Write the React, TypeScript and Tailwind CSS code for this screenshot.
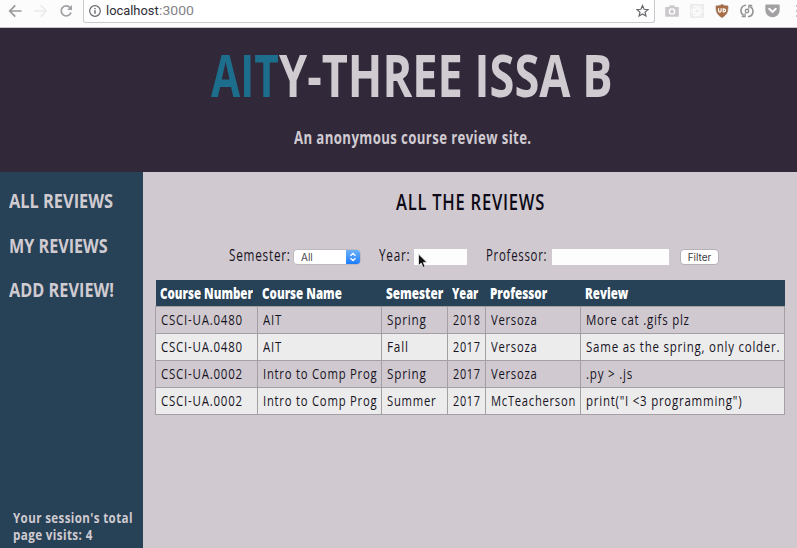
import { useLayoutEffect, useRef, useState } from "react";

type FitProps = { w: number; children: string; className?: string };

/** Condensed text: one line squeezed horizontally to a given width. */
function Fit({ w, children, className = "" }: FitProps) {
  const ref = useRef<HTMLSpanElement>(null);
  const [scale, setScale] = useState(1);
  useLayoutEffect(() => {
    if (ref.current) setScale(w / ref.current.offsetWidth);
  }, [w, children]);
  return (
    <span className={`flex ${className}`} style={{ width: w }}>
      <span ref={ref} className="block shrink-0 origin-left whitespace-pre" style={{ transform: `scaleX(${scale})` }}>
        {children}
      </span>
    </span>
  );
}

function BrowserBar() {
  return (
    <div className="flex h-[28px] shrink-0 items-start border-b border-[#c8c5ca] bg-[#fcfcfc]">
      <svg className="ml-[8px] mt-[4px] h-[14px] w-[15px] shrink-0" viewBox="0 0 15 14" fill="none" stroke="#9a989b" strokeWidth="1.7">
        <path d="M13.5 7H2M7.3 1.3L1.7 7l5.6 5.7" />
      </svg>
      <svg className="ml-[10px] mt-[4px] h-[14px] w-[15px] shrink-0" viewBox="0 0 15 14" fill="none" stroke="#ebeaec" strokeWidth="1.7">
        <path d="M1 7h11.5M7.700 1.300L13.300 7l-5.600 5.700" />
      </svg>
      <svg className="ml-[11px] mt-[4px] h-[14px] w-[14px] shrink-0" viewBox="0 0 15 15" fill="none" stroke="#a3a1a5" strokeWidth="1.9">
        <path d="M12 4A5.4 5.4 0 1 0 12.9 9" />
        <path d="M13.9 1.2v5.3H8.6z" fill="#a3a1a5" stroke="none" />
      </svg>
      <div className="ml-[10px] flex h-[23px] w-[572px] shrink-0 rounded-b-[3px] border border-t-0 border-[#cbc9cf] bg-white">
        <svg className="ml-[5px] mt-[5px] h-[12px] w-[12px] shrink-0" viewBox="0 0 12 12" fill="none" stroke="#67656c" strokeWidth="1.2">
          <circle cx="6" cy="6" r="5.3" />
          <path d="M6 5.2v3.6M6 2.9v1.3" strokeWidth="1.4" />
        </svg>
        <div className="ml-[5px] mt-[2px] flex font-['Roboto',sans-serif] text-[13px] leading-[18px]">
          <Fit w={52.5} className="text-[#2f2d35]">localhost</Fit>
          <Fit w={34.5} className="text-[#858388]">:3000</Fit>
        </div>
        <svg className="ml-auto mr-[5px] mt-[4px] h-[14px] w-[13px]" viewBox="0 0 14 14" fill="none" stroke="#69676c" strokeWidth="1.3">
          <path d="M7 1.2l1.7 3.9 4.2.4-3.2 2.8 1 4.1L7 10.2l-3.7 2.2 1-4.1L1.1 5.5l4.2-.4z" />
        </svg>
      </div>
      <svg className="ml-[10px] mt-[5px] h-[12px] w-[14px] shrink-0" viewBox="0 0 14 12">
        <path fill="#cbc9cc" d="M1.2 2h2.500L5 .3h4L10.300 2h2.500c.6 0 1 .4 1 1v7.700c0 .6-.4 1-1 1H1.200c-.6 0-1-.4-1-1V3c0-.6.4-1 1-1z" />
        <circle cx="7" cy="6.500" r="2.600" fill="#cbc9cc" stroke="#fff" strokeWidth="1.400" />
      </svg>
      <svg className="ml-[11px] mt-[4px] h-[14px] w-[14px] shrink-0" viewBox="0 0 14 14">
        <path fill="#ececed" d="M0 0h14v14H0z" />
        <g fill="none" stroke="#fcfcfc" strokeWidth="1.200">
          <ellipse cx="7" cy="7" rx="5.500" ry="2.200" />
          <ellipse cx="7" cy="7" rx="5.500" ry="2.200" transform="rotate(60 7 7)" />
          <ellipse cx="7" cy="7" rx="5.500" ry="2.200" transform="rotate(120 7 7)" />
        </g>
      </svg>
      <svg className="ml-[11px] mt-[4px] h-[14px] w-[14px] shrink-0" viewBox="0 0 14 14">
        <path fill="#a96c43" stroke="#9a7565" strokeWidth=".7" d="M7 .4c1.800 1.100 3.700 1.500 6 1.500 0 5.500-.6 8.500-6 11.700C1.600 10.400 1 7.400 1 1.900 3.300 1.900 5.200 1.500 7 .4z" />
        <path d="M3.600 4.300v2.500c0 1.800 2.500 1.800 2.500 0V4.300M8.200 4.800v3c3.200.3 3.200-3.300 0-3z" fill="none" stroke="#fff" strokeWidth="1.200" />
      </svg>
      <svg className="ml-[11px] mt-[4px] h-[14px] w-[14px] shrink-0" viewBox="0 0 14 14" fill="none" stroke="#959396" strokeWidth="1.600">
        <path d="M6 1.300C.5 1.800-.8 8.500 3.700 11.500M8 12.700c5.500-.5 6.800-7.200 2.300-10.200" />
        <path d="M1.800 12.500h3.300V9.300M12.200 1.500H8.900v3.200" strokeWidth="1.400" />
        <circle cx="7" cy="7" r="1.700" strokeWidth="1.400" />
      </svg>
      <svg className="ml-[11px] mt-[4px] h-[14px] w-[15px] shrink-0" viewBox="0 0 15 14">
        <path fill="#a3a1a4" d="M1.500.5h12c.7 0 1.200.5 1.200 1.200v4.400a7.200 7.200 0 0 1-14.400 0V1.700C.3 1 .8.500 1.500.5z" />
        <path d="M4.200 4.800l3.300 3.100 3.300-3.100" fill="none" stroke="#fff" strokeWidth="1.900" strokeLinecap="round" />
      </svg>
      <div className="ml-auto mt-[5px] flex w-[1px] flex-col gap-[3px]">
        <i className="h-[2px] bg-[#c4c2c5]" />
        <i className="h-[2px] bg-[#c4c2c5]" />
        <i className="h-[2px] bg-[#c4c2c5]" />
      </div>
    </div>
  );
}

const columns = [
  { label: "Course Number", text: 93, cell: "w-[102px]" },
  { label: "Course Name", text: 79.5, cell: "w-[124px]" },
  { label: "Semester", text: 57, cell: "w-[66px]" },
  { label: "Year", text: 26.5, cell: "w-[38px]" },
  { label: "Professor", text: 57.5, cell: "w-[95px]" },
  { label: "Review", text: 43, cell: "w-[204px]" },
];

const rows: [string, number][][] = [
  [["CSCI-UA.0480", 82], ["AIT", 19], ["Spring", 40], ["2018", 27.5], ["Versoza", 46.5], ["More cat .gifs plz", 104]],
  [["CSCI-UA.0480", 82], ["AIT", 19], ["Fall", 22], ["2017", 27.5], ["Versoza", 46.5], ["Same as the spring, only colder.", 194]],
  [["CSCI-UA.0002", 82], ["Intro to Comp Prog", 114.5], ["Spring", 40], ["2017", 27.5], ["Versoza", 46.5], [".py > .js", 47]],
  [["CSCI-UA.0002", 82], ["Intro to Comp Prog", 114.5], ["Summer", 49.5], ["2017", 27.5], ["McTeacherson", 85], ['print("I <3 programming")', 156]],
];

function ReviewTable() {
  return (
    <table className="ml-[12px] mt-[14px] w-[629px] table-fixed border-collapse text-left">
      <thead>
        <tr className="h-[26px] bg-[#274156] text-white">
          {columns.map((c) => (
            <th key={c.label} className={`${c.cell} p-0 pl-[4.5px] align-top text-[15px] font-extrabold leading-[26px]`}>
              <Fit w={c.text}>{c.label}</Fit>
            </th>
          ))}
        </tr>
      </thead>
      <tbody>
        {rows.map((row, r) => (
          <tr key={r} className="h-[27px] even:bg-[#ececec]">
            {row.map(([text, w], i) => (
              <td key={i} className="border border-[#a39fa4] p-0 pl-[5px] align-top text-[15px] font-medium leading-[25px] tracking-[1px] text-[#17131f]">
                <Fit w={w}>{text}</Fit>
              </td>
            ))}
          </tr>
        ))}
      </tbody>
    </table>
  );
}

function Filters() {
  return (
    <form className="ml-[86px] mt-[28px] flex h-[22px] items-start text-[15.5px] font-medium leading-[22px] tracking-[1px] text-[#17131f]">
      <Fit w={61.5}>Semester:</Fit>
      <div className="ml-[2.5px] mt-[5px] flex h-[16px] w-[68px] overflow-hidden rounded-[4px] border border-[#bdb9bf] bg-white">
        <span className="ml-[7px] grow font-['Inter',sans-serif] text-[10px] font-normal leading-[15px] tracking-normal text-[#4c4a4f]">All</span>
        <span className="flex w-[14px] items-center justify-center bg-gradient-to-b from-[#6ab1fa] to-[#1a7bfa]">
          <svg className="h-[10px] w-[8px]" viewBox="0 0 8 10" fill="none" stroke="#fff" strokeWidth="1.300">
            <path d="M1.500 3.800L4 1.500l2.500 2.300M1.500 6.200L4 8.500l2.500-2.300" />
          </svg>
        </span>
      </div>
      <Fit w={31} className="ml-[18px]">Year:</Fit>
      <div className="relative ml-[4px] mt-[5px] h-[16px] w-[53px] bg-[#fdfdfd]">
        <svg className="absolute left-[3px] top-[4px] h-[17px] w-[12px]" viewBox="0 0 12 17">
          <path d="M1.500 1v11.600l2.700-2.500 1.900 4.400 2-.9-1.800-4.200h3.700z" fill="#111" stroke="#eee" strokeWidth=".8" />
        </svg>
      </div>
      <Fit w={61} className="ml-[19px]">Professor:</Fit>
      <div className="ml-[5px] mt-[5px] h-[16px] w-[117px] bg-[#fdfdfd]" />
      <button type="button" className="ml-[11px] mt-[5px] flex h-[16px] w-[39px] items-center justify-center rounded-[4px] border border-[#b5b1b7] bg-white font-['Inter',sans-serif] text-[10px] font-normal leading-none tracking-normal text-[#3d3b40]">
        Filter
      </button>
    </form>
  );
}

export default function App() {
  return (
    <div className="flex h-[548px] w-[797px] flex-col overflow-hidden bg-[#d0cad0] font-['Open_Sans','Noto_Sans',sans-serif]">
      <BrowserBar />
      <header className="flex h-[144px] shrink-0 flex-col bg-[#312839] text-[#d0cbd1]">
        <h1 className="ml-[210.5px] mt-[6px] flex text-[58.500px] font-bold leading-[80px]">
          <Fit w={68} className="text-[#1c6e8c]">AIT</Fit>
          <Fit w={333.5}>Y-THREE ISSA B</Fit>
        </h1>
        <p className="ml-[294px] mt-[12px] text-[17px] font-bold leading-[24px] tracking-[0.500px]">
          <Fit w={237.5}>An anonymous course review site.</Fit>
        </p>
      </header>
      <div className="flex grow">
        <nav className="flex w-[143px] shrink-0 flex-col bg-[#274156] text-[#d0cbd1]">
          <div className="ml-[8.5px] mt-[15px] flex flex-col gap-[16.500px] text-[20px] font-bold leading-[28px]">
            <Fit w={104}>ALL REVIEWS</Fit>
            <Fit w={98.5}>MY REVIEWS</Fit>
            <Fit w={105}>ADD REVIEW!</Fit>
          </div>
          <div className="mb-[5px] ml-[13px] mt-auto text-[15px] font-bold leading-[17px] tracking-[0.500px]">
            <Fit w={119.5}>Your session's total</Fit>
            <Fit w={80}>page visits: 4</Fit>
          </div>
        </nav>
        <main className="flex grow flex-col">
          <h2 className="ml-[253px] mt-[14px] text-[22px] font-semibold leading-[30px] tracking-[1px] text-[#0d0916]">
            <Fit w={149}>ALL THE REVIEWS</Fit>
          </h2>
          <Filters />
          <ReviewTable />
        </main>
      </div>
    </div>
  );
}
